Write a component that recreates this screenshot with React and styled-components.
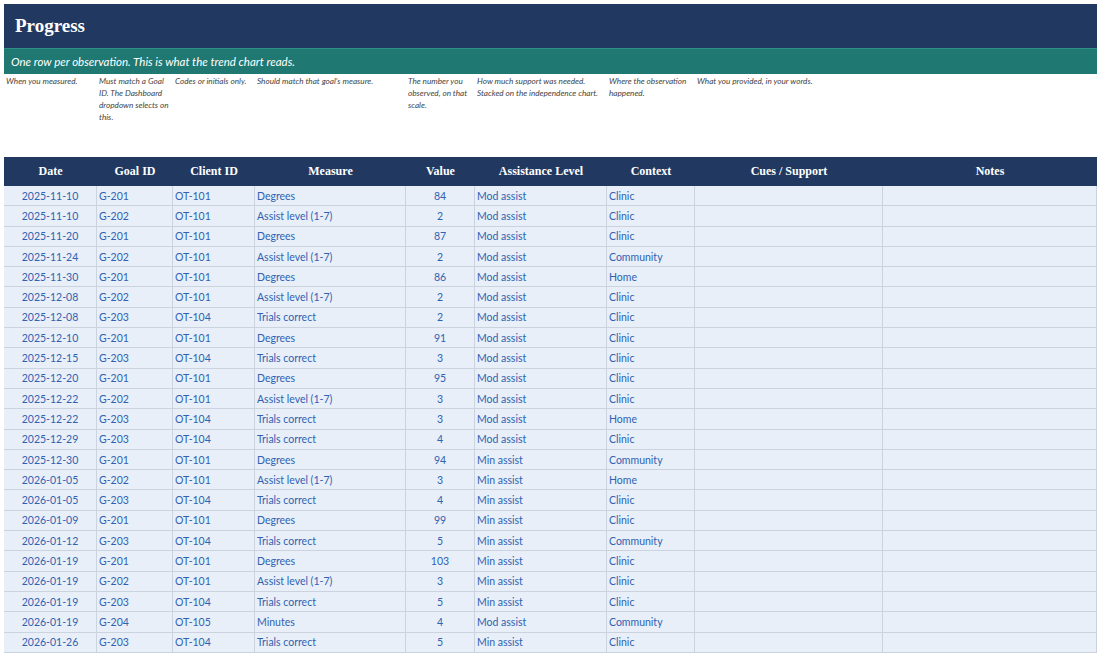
import React from "react";
import styled, { createGlobalStyle } from "styled-components";

const G = createGlobalStyle`
  body { margin: 0; background: #fff; font-family: Lato, "Open Sans", sans-serif; }
`;
const cols = "93px 76px 82px 151px 69px 132px 88px 188px 214px";
const Page = styled.div`padding: 4px 3px 0 4px; width: 1093px;`;
const Title = styled.div`
  background: #213961; color: #fff; height: 44px; display: flex; align-items: center;
  padding-left: 11px; font: bold 19px "Liberation Serif", "DejaVu Serif", serif;
`;
const Sub = styled.div`
  background: #1f7872; color: #fff; height: 25px; display: flex; align-items: center;
  padding-left: 7px; font-style: italic; font-size: 11.5px; border-top: 1px solid #2d8f86;
`;
const Help = styled.div`
  display: grid; grid-template-columns: ${cols}; height: 82px; align-items: start;
  font-style: italic; font-size: 8.2px; color: #444; line-height: 12px; padding-top: 1px;
`;
const HelpCell = styled.div`padding: 0 2px; ${p => p.$wide ? "white-space: nowrap;" : ""}`;
const Head = styled.div`
  display: grid; grid-template-columns: ${cols}; background: #213961; height: 29px;
  color: #fff; font: bold 12px "Liberation Serif", "DejaVu Serif", serif;
  align-items: center; text-align: center;
`;
const Row = styled.div`
  display: grid; grid-template-columns: ${cols}; height: 20.3px; background: #e8eff8;
`;
const Cell = styled.div`
  border-right: 1px solid #cbd3df; border-bottom: 1px solid #cbd3df; color: #2f62b2;
  font-size: 10.5px; display: flex; align-items: center; padding: 0 2px;
  justify-content: ${p => p.$c ? "center" : "flex-start"};
`;
const data = `2025-11-10|G-201|OT-101|Degrees|84|Mod assist|Clinic
2025-11-10|G-202|OT-101|Assist level (1-7)|2|Mod assist|Clinic
2025-11-20|G-201|OT-101|Degrees|87|Mod assist|Clinic
2025-11-24|G-202|OT-101|Assist level (1-7)|2|Mod assist|Community
2025-11-30|G-201|OT-101|Degrees|86|Mod assist|Home
2025-12-08|G-202|OT-101|Assist level (1-7)|2|Mod assist|Clinic
2025-12-08|G-203|OT-104|Trials correct|2|Mod assist|Clinic
2025-12-10|G-201|OT-101|Degrees|91|Mod assist|Clinic
2025-12-15|G-203|OT-104|Trials correct|3|Mod assist|Clinic
2025-12-20|G-201|OT-101|Degrees|95|Mod assist|Clinic
2025-12-22|G-202|OT-101|Assist level (1-7)|3|Mod assist|Clinic
2025-12-22|G-203|OT-104|Trials correct|3|Mod assist|Home
2025-12-29|G-203|OT-104|Trials correct|4|Mod assist|Clinic
2025-12-30|G-201|OT-101|Degrees|94|Min assist|Community
2026-01-05|G-202|OT-101|Assist level (1-7)|3|Min assist|Home
2026-01-05|G-203|OT-104|Trials correct|4|Min assist|Clinic
2026-01-09|G-201|OT-101|Degrees|99|Min assist|Clinic
2026-01-12|G-203|OT-104|Trials correct|5|Min assist|Community
2026-01-19|G-201|OT-101|Degrees|103|Min assist|Clinic
2026-01-19|G-202|OT-101|Assist level (1-7)|3|Min assist|Clinic
2026-01-19|G-203|OT-104|Trials correct|5|Min assist|Clinic
2026-01-19|G-204|OT-105|Minutes|4|Mod assist|Community
2026-01-26|G-203|OT-104|Trials correct|5|Min assist|Clinic`.split("\n").map(l => l.split("|"));
const helps = ["When you measured.", "Must match a Goal ID. The Dashboard dropdown selects on this.", "Codes or initials only.", "Should match that goal's measure.", "The number you observed, on that scale.", "How much support was needed. Stacked on the independence chart.", "Where the observation happened.", "What you provided, in your words.", ""];
const heads = ["Date", "Goal ID", "Client ID", "Measure", "Value", "Assistance Level", "Context", "Cues / Support", "Notes"];

export default function App() {
  return (<Page><G />
    <Title>Progress</Title>
    <Sub>One row per observation. This is what the trend chart reads.</Sub>
    <Help>{helps.map((h, i) => <HelpCell key={i} $wide={i === 2 || i === 3 || i === 7}>{h}</HelpCell>)}</Help>
    <Head>{heads.map(h => <div key={h}>{h}</div>)}</Head>
    {data.map((r, i) => <Row key={i}>
      {r.map((v, j) => <Cell key={j} $c={j === 0 || j === 4}>{v}</Cell>)}
      <Cell /><Cell />
    </Row>)}
  </Page>);
}
